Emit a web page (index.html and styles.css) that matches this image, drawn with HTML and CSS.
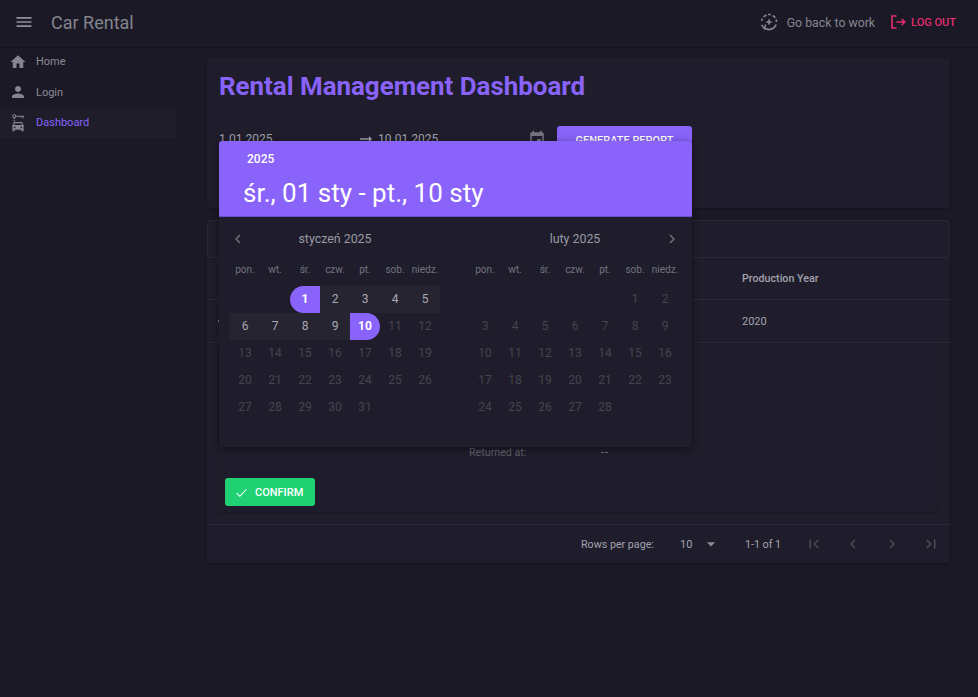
FILE: index.html
```html
<!DOCTYPE html>
<html lang="en">
<head>
    <meta charset="UTF-8">
    <meta name="viewport" content="width=device-width, initial-scale=1.0">
    <title>Car Rental</title>
    <link rel="stylesheet" href="styles.css">
</head>
<body>
    <header class="topbar">
        <div class="topbar-left">
            <svg class="menu-icon" viewBox="0 0 24 24"><path d="M3 18h18v-2H3v2zm0-5h18v-2H3v2zm0-7v2h18V6H3z"/></svg>
            <span class="brand">Car Rental</span>
        </div>
        <div class="topbar-right">
            <svg class="work-icon line" viewBox="0 0 24 24" stroke-width="2">
                <path d="M3.200 10.500A9 9 0 0 1 4 8" />
                <path d="M5.500 6A9 9 0 0 1 9 3.500" />
                <path d="M11 3a9 9 0 0 1 3 .2" />
                <path d="M16.500 4.200A9 9 0 0 1 19.500 7" />
                <path d="M20.500 9a9 9 0 0 1 .5 3" />
                <path d="M20.500 15a9 9 0 0 1-13.500 4.500" />
                <path d="M3 15.500l3.500 4.500 1.500-5" stroke-width="1.800"/>
                <path class="solid" d="M12 7.500l1.200 3.300 3.300 1.200-3.300 1.200L12 16.500l-1.200-3.300L7.500 12l3.300-1.200z" stroke="none"/>
            </svg>
            <span class="work-label">Go back to work</span>
            <button class="logout" type="button">
                <svg class="line" viewBox="0 0 24 24" stroke-width="2.200"><path d="M10 4H4v16h6"/><path d="M10 12h11M17 8l4 4-4 4"/></svg>
                LOG OUT
            </button>
        </div>
    </header>

    <div class="layout">
        <nav class="sidebar">
            <a class="nav-item">
                <svg viewBox="0 0 24 24"><path d="M10 20v-6h4v6h5v-8h3L12 3 2 12h3v8z"/></svg>
                Home
            </a>
            <a class="nav-item">
                <svg viewBox="0 0 24 24"><path d="M12 12c2.210 0 4-1.790 4-4s-1.790-4-4-4-4 1.790-4 4 1.790 4 4 4zm0 2c-2.670 0-8 1.340-8 4v2h16v-2c0-2.660-5.330-4-8-4z"/></svg>
                Login
            </a>
            <a class="nav-item active">
                <svg class="line" viewBox="0 0 24 24" stroke-width="1.500">
                    <circle cx="7" cy="3" r="2"/>
                    <path d="M9 3h10v2.500M16 3v2M7 5v2M7 8v2"/>
                    <path d="M7 11.500h10l1.500 4H5.500z"/>
                    <path class="solid" stroke="none" fill-rule="evenodd" d="M4.500 15h15v8h-3v-2h-9v2h-3zM7.500 16.500a1.200 1.200 0 1 0 0 2.400 1.200 1.200 0 0 0 0-2.400zm9 0a1.200 1.200 0 1 0 0 2.400 1.200 1.200 0 0 0 0-2.400z"/>
                </svg>
                Dashboard
            </a>
        </nav>

        <main class="content">
            <section class="card report-card">
                <h1>Rental Management Dashboard</h1>
                <div class="report-form">
                    <span class="date-start">1.01.2025</span>
                    <svg class="date-arrow" viewBox="0 0 24 24"><path d="M16 11H4v2h12v3l4-4-4-4z"/></svg>
                    <span class="date-end">10.01.2025</span>
                    <svg class="date-icon" viewBox="0 0 24 24"><path d="M19 3h-1V1h-2v2H8V1H6v2H5a2 2 0 0 0-2 2v14a2 2 0 0 0 2 2h14a2 2 0 0 0 2-2V5a2 2 0 0 0-2-2zm0 16H5V8h14zM12 12h5v5h-5z"/></svg>
                    <button class="generate" type="button">GENERATE REPORT</button>
                </div>
            </section>

            <section class="card table-card">
                <div class="table-toolbar"></div>
                <div class="table-row table-head"><span>Production Year</span></div>
                <div class="table-row"><i class="row-dot"></i><span>2020</span></div>
                <div class="detail">
                    <div class="detail-inner">
                        <div class="returned"><span>Returned at:</span><span class="returned-value">--</span></div>
                        <button class="confirm" type="button">
                            <svg class="line" viewBox="0 0 24 24" stroke-width="2"><path d="M3 13l6 6L21 6"/></svg>
                            CONFIRM
                        </button>
                    </div>
                </div>
                <div class="pagination">
                    <span class="rows-label">Rows per page:</span>
                    <span class="page-size">10</span>
                    <svg class="page-caret" viewBox="0 0 24 24"><path d="M7 10l5 5 5-5z"/></svg>
                    <span class="page-count">1-1 of 1</span>
                    <svg class="page-btn" viewBox="0 0 24 24"><path d="M18.410 16.590L13.820 12l4.590-4.590L17 6l-6 6 6 6zM6 6h2v12H6z"/></svg>
                    <svg class="page-btn" viewBox="0 0 24 24"><path d="M15.410 7.410L14 6l-6 6 6 6 1.410-1.410L10.830 12z"/></svg>
                    <svg class="page-btn" viewBox="0 0 24 24"><path d="M10 6L8.590 7.410 13.170 12l-4.580 4.590L10 18l6-6z"/></svg>
                    <svg class="page-btn" viewBox="0 0 24 24"><path d="M5.590 7.410L10.180 12l-4.590 4.590L7 18l6-6-6-6zM16 6h2v12h-2z"/></svg>
                </div>
            </section>
        </main>
    </div>

    <div class="picker">
        <div class="picker-head">
            <div class="picker-year">2025</div>
            <div class="picker-range">śr., 01 sty - pt., 10 sty</div>
        </div>
        <div class="months">
            <div class="month">
                <div class="month-title">
                    <svg viewBox="0 0 24 24"><path d="M15.410 7.410L14 6l-6 6 6 6 1.410-1.410L10.830 12z"/></svg>
                    <span>styczeń 2025</span>
                </div>
                <div class="days">
                    <span class="wd">pon.</span><span class="wd">wt.</span><span class="wd">śr.</span><span class="wd">czw.</span><span class="wd">pt.</span><span class="wd">sob.</span><span class="wd">niedz.</span>
                    <span></span><span></span><span class="d start">1</span><span class="d sel">2</span><span class="d sel">3</span><span class="d sel">4</span><span class="d sel">5</span>
                    <span class="d sel">6</span><span class="d sel">7</span><span class="d sel">8</span><span class="d sel">9</span><span class="d end">10</span><span class="d off">11</span><span class="d off">12</span>
                    <span class="d off">13</span><span class="d off">14</span><span class="d off">15</span><span class="d off">16</span><span class="d off">17</span><span class="d off">18</span><span class="d off">19</span>
                    <span class="d off">20</span><span class="d off">21</span><span class="d off">22</span><span class="d off">23</span><span class="d off">24</span><span class="d off">25</span><span class="d off">26</span>
                    <span class="d off">27</span><span class="d off">28</span><span class="d off">29</span><span class="d off">30</span><span class="d off">31</span>
                </div>
            </div>
            <div class="month">
                <div class="month-title">
                    <span>luty 2025</span>
                    <svg class="next" viewBox="0 0 24 24"><path d="M10 6L8.590 7.410 13.170 12l-4.580 4.590L10 18l6-6z"/></svg>
                </div>
                <div class="days">
                    <span class="wd">pon.</span><span class="wd">wt.</span><span class="wd">śr.</span><span class="wd">czw.</span><span class="wd">pt.</span><span class="wd">sob.</span><span class="wd">niedz.</span>
                    <span></span><span></span><span></span><span></span><span></span><span class="d off">1</span><span class="d off">2</span>
                    <span class="d off">3</span><span class="d off">4</span><span class="d off">5</span><span class="d off">6</span><span class="d off">7</span><span class="d off">8</span><span class="d off">9</span>
                    <span class="d off">10</span><span class="d off">11</span><span class="d off">12</span><span class="d off">13</span><span class="d off">14</span><span class="d off">15</span><span class="d off">16</span>
                    <span class="d off">17</span><span class="d off">18</span><span class="d off">19</span><span class="d off">20</span><span class="d off">21</span><span class="d off">22</span><span class="d off">23</span>
                    <span class="d off">24</span><span class="d off">25</span><span class="d off">26</span><span class="d off">27</span><span class="d off">28</span>
                </div>
            </div>
        </div>
    </div>
</body>
</html>
```

FILE: styles.css
```css
* {
    box-sizing: border-box;
}
html, body {
    height: 100%;
}
body {
    margin: 0;
    overflow: hidden;
    background-color: #1b1926;
    color: #a2a2ad;
    font-family: Roboto, "Liberation Sans", sans-serif;
    font-size: 12px;
}
svg {
    fill: currentColor;
    flex: none;
}
svg.line {
    fill: none;
    stroke: currentColor;
}
svg .solid {
    fill: currentColor;
}

/* top bar */
.topbar {
    display: flex;
    align-items: center;
    justify-content: space-between;
    height: 48px;
    padding: 0 22px 3px 16px;
    border-bottom: 1px solid #14131e;
}
.topbar-left, .topbar-right {
    display: flex;
    align-items: center;
}
.menu-icon {
    width: 16px;
    height: 16px;
    margin-right: 19px;
    transform: scale(1.25);
    color: #8f8f9a;
}
.brand {
    font-size: 18px;
    color: #84848f;
}
.work-icon {
    width: 20px;
    height: 20px;
    margin-right: 8px;
    color: #85858f;
}
.work-label {
    margin-top: 2px;
    font-size: 12.300px;
    color: #85858f;
}
.logout {
    display: flex;
    align-items: center;
    gap: 4px;
    margin-left: 14px;
    padding: 0;
    border: none;
    background: none;
    color: #e42d6e;
    font: 500 11px Roboto, sans-serif;
}
.logout svg {
    width: 18px;
    height: 18px;
}

/* sidebar */
.layout {
    display: flex;
}
.sidebar {
    width: 178px;
    height: 649px;
    border-right: 1px solid #181723;
    flex: none;
}
.nav-item {
    display: flex;
    align-items: center;
    height: 30px;
    padding: 0 0 2px 9px;
    gap: 9px;
    font-size: 11px;
    color: #8c8c97;
}
.nav-item svg {
    width: 18px;
    height: 18px;
    color: #85858f;
    margin-top: 2px;
}
.nav-item:nth-child(1) {
    height: 29px;
    padding-bottom: 3px;
}
.nav-item:nth-child(2) {
    height: 31px;
    padding-bottom: 1px;
}
.nav-item:nth-child(2) svg {
    margin-top: 0;
}
.nav-item.active {
    background-color: #1f1d2a;
    color: #8963fa;
}

/* main */
.content {
    flex: 1;
    padding: 10px 28px 0 29px;
}
.card {
    background-color: #1f1d2b;
    border-radius: 4px;
    box-shadow: 0 1px 3px rgba(0, 0, 0, 0.3);
}
.report-card {
    height: 150px;
    padding: 0 12px;
}
h1 {
    margin: 0;
    padding-top: 11px;
    color: #8963fa;
    font-size: 25.900px;
    font-weight: 700;
    line-height: 34px;
}
.report-form {
    display: flex;
    align-items: center;
    margin-top: 23px;
    height: 28px;
    font-size: 12px;
}
.date-start {
    width: 140px;
    margin-bottom: 3px;
}
.date-arrow {
    width: 18px;
    height: 18px;
    margin: 0 3px 3px -2px;
}
.date-end {
    width: 150px;
    margin-bottom: 3px;
}
.date-icon {
    width: 18px;
    height: 18px;
    margin-bottom: 3px;
    color: #75757f;
}
.generate {
    margin-left: 11px;
    width: 135px;
    height: 28px;
    border: none;
    border-radius: 3px;
    background-color: #8963fa;
    color: #fff;
    font: 500 11px Roboto, sans-serif;
}
.table-card {
    height: 343px;
    margin-top: 12px;
}
.table-toolbar {
    height: 38px;
    border: 1px solid #2a2937;
    border-radius: 4px;
}
.table-row {
    display: flex;
    align-items: center;
    height: 43px;
    padding-left: 535px;
    border-bottom: 1px solid #2a2937;
    font-size: 11px;
}
.table-head {
    height: 42px;
    font-size: 10.700px;
    font-weight: 500;
}
.row-dot {
    width: 2px;
    height: 2px;
    margin-left: -524px;
    margin-right: 522px;
    background-color: #85858f;
}
.detail {
    height: 182px;
    padding: 0 12px;
    border-bottom: 1px solid #2a2937;
}
.detail-inner {
    height: 169px;
    padding: 103px 6px 0;
    border-radius: 4px;
    box-shadow: 0 1px 2px rgba(0, 0, 0, 0.3);
}
.returned {
    display: flex;
    padding-left: 244px;
    font-size: 10.700px;
    line-height: 14px;
    color: #62626d;
}
.returned span:first-child {
    width: 132px;
}
.returned-value {
    color: #8c8c97;
    letter-spacing: 1px;
}
.confirm {
    display: flex;
    align-items: center;
    gap: 7px;
    width: 90px;
    height: 28px;
    margin-top: 18px;
    padding-left: 10px;
    border: none;
    border-radius: 3px;
    background-color: #1fd173;
    color: #fff;
    font: 500 11px Roboto, sans-serif;
}
.confirm svg {
    width: 13px;
    height: 13px;
}
.pagination {
    display: flex;
    align-items: center;
    height: 38px;
    padding-left: 374px;
    font-size: 11px;
}
.rows-label {
    width: 73px;
    font-size: 10.700px;
    white-space: nowrap;
}
.page-size {
    margin-left: 26px;
    width: 21px;
}
.page-caret {
    width: 20px;
    height: 20px;
    color: #8c8c97;
}
.page-count {
    margin-left: 24px;
    width: 36px;
    font-size: 10.700px;
    white-space: nowrap;
}
.page-btn {
    width: 18px;
    height: 18px;
    margin-left: 21px;
    color: #4a4956;
}
.page-count + .page-btn {
    margin-left: 24px;
}

/* date range picker */
.picker {
    position: absolute;
    left: 219px;
    top: 141px;
    width: 473px;
    height: 306px;
    background-color: #1f1d2b;
    border-radius: 3px;
    box-shadow: 0 2px 8px rgba(0, 0, 0, 0.45);
}
.picker-head {
    height: 76px;
    padding: 10px 24px 0;
    background-color: #8963fa;
    border-radius: 3px 3px 0 0;
    border-bottom: 1px solid #6f50cc;
    color: #fff;
}
.picker-year {
    padding-left: 4px;
    font-size: 12px;
    font-weight: 500;
    line-height: 16px;
}
.picker-range {
    margin-top: 10px;
    font-size: 26px;
    line-height: 32px;
}
.months {
    display: flex;
    gap: 30px;
    padding: 0 11px;
}
.month {
    width: 210px;
}
.month-title {
    position: relative;
    height: 39px;
    line-height: 44px;
    text-align: center;
    font-size: 12.400px;
    color: #9a9aa5;
}
.month-title svg {
    position: absolute;
    left: -1px;
    top: 13px;
    width: 18px;
    height: 18px;
    color: #6f6f7a;
}
.month-title svg.next {
    left: auto;
    right: -1px;
}
.days {
    display: grid;
    grid-template-columns: repeat(7, 30px);
    grid-template-rows: 30px;
    grid-auto-rows: 27px;
    text-align: center;
    line-height: 27px;
}
.wd {
    font-size: 10px;
    line-height: 28px;
    white-space: nowrap;
    color: #73737e;
}
.d {
    font-size: 12px;
    color: #a8a8b2;
}
.sel {
    background-color: #262431;
}
.off {
    color: #45444f;
}
.start, .end {
    background-color: #8963fa;
    color: #fff;
    font-weight: 700;
}
.start {
    border-radius: 14px 0 0 14px;
}
.end {
    border-radius: 0 14px 14px 0;
}
```
